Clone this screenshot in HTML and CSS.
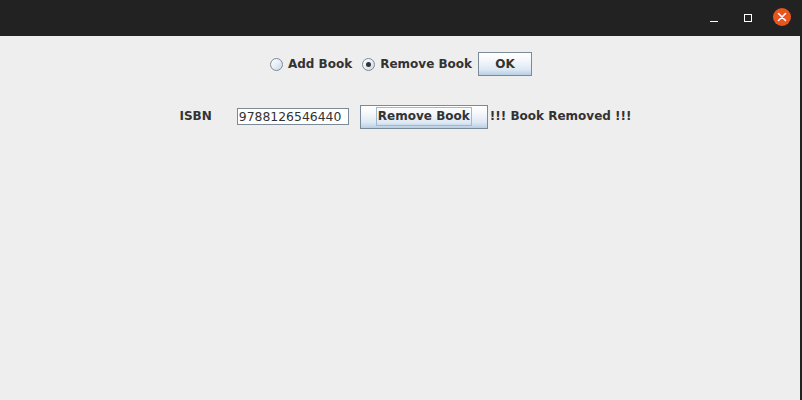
FILE: index.html
```html
<!DOCTYPE html>
<html>
<head>
<meta charset="utf-8">
<link rel="stylesheet" href="styles.css">
</head>
<body>
<div class="window">
  <div class="titlebar">
    <span class="tb-min"></span>
    <span class="tb-max"></span>
    <span class="tb-close">
      <svg width="18" height="18" viewBox="0 0 18 18"><circle cx="9" cy="9" r="9" fill="#e95420"/><path d="M5.5 5.5 L12.5 12.5 M12.5 5.5 L5.5 12.5" stroke="#fff" stroke-width="1.6" stroke-linecap="round"/></svg>
    </span>
  </div>
  <div class="content">
    <div class="row row-top">
      <label class="radio"><span class="radio-dot"></span><span class="radio-text">Add Book</span></label>
      <label class="radio radio-second"><span class="radio-dot checked"></span><span class="radio-text">Remove Book</span></label>
      <span class="btn btn-ok">OK</span>
    </div>
    <div class="row row-form">
      <span class="lbl lbl-isbn">ISBN</span>
      <span class="field">9788126546440</span>
      <span class="btn btn-remove"><span class="focus">Remove Book</span></span>
      <span class="lbl lbl-status">!!! Book Removed !!!</span>
    </div>
  </div>
</div>
</body>
</html>
```

FILE: styles.css
```css
html, body {
  margin: 0;
  padding: 0;
  width: 802px;
  height: 400px;
  overflow: hidden;
  background: #222222;
}
.window {
  width: 802px;
  height: 400px;
  display: flex;
  flex-direction: column;
  font-family: "DejaVu Sans", sans-serif;
  font-size: 12px;
  color: #333333;
}
.titlebar {
  height: 36px;
  background: #222222;
  display: flex;
  align-items: center;
  justify-content: flex-end;
  flex-shrink: 0;
}
.tb-min {
  width: 8px;
  height: 1px;
  background: #ffffff;
  margin-top: 7px;
  margin-right: 26px;
}
.tb-max {
  width: 6px;
  height: 6px;
  border: 1px solid #ffffff;
  margin-right: 21px;
}
.tb-close {
  width: 18px;
  height: 18px;
  margin-right: 11px;
  margin-top: -2px;
  display: flex;
}
.content {
  flex: 1;
  background: #eeeeee;
  margin-right: 2px;
  display: flex;
  flex-direction: column;
  align-items: center;
}
.row {
  display: flex;
  align-items: center;
  height: 24px;
}
.row-top {
  margin-top: 16px;
  margin-left: 2px;
}
.row-form {
  margin-top: 28px;
  margin-left: 11px;
}
.radio {
  display: flex;
  align-items: center;
  font-weight: bold;
}
.radio-second {
  margin-left: 10px;
}
.radio-dot {
  width: 11px;
  height: 11px;
  border: 1px solid #7a8a99;
  border-radius: 50%;
  background: linear-gradient(135deg, #ffffff 0%, #e8eef5 50%, #c8d6e5 100%);
  margin-right: 5px;
  position: relative;
  box-sizing: content-box;
}
.radio-dot.checked::after {
  content: "";
  position: absolute;
  left: 3px;
  top: 3px;
  width: 5px;
  height: 5px;
  border-radius: 50%;
  background: #333333;
}
.btn {
  display: flex;
  align-items: center;
  justify-content: center;
  box-sizing: border-box;
  height: 24px;
  border: 1px solid #7a8a99;
  background: linear-gradient(180deg, #ffffff 0%, #f4f7fb 35%, #dde8f3 75%, #b8cfe5 100%);
  font-weight: bold;
  color: #333333;
}
.btn-ok {
  width: 54px;
  margin-left: 6px;
}
.btn-remove {
  width: 128px;
  margin-left: 11px;
}
.focus {
  border: 1px solid #a3b8cc;
  padding: 1px 1px 2px 1px;
  line-height: 14px;
}
.lbl {
  font-weight: bold;
}
.lbl-status {
  margin-left: 2px;
}
.row-form .btn-remove,
.row-form .field {
  margin-top: 1px;
}
.field {
  box-sizing: border-box;
  width: 112px;
  height: 17px;
  margin-left: 25px;
  border: 1px solid #7a8a99;
  background: #ffffff;
  padding-left: 1px;
  line-height: 15px;
  font-size: 12.4px;
  font-weight: normal;
}
```
